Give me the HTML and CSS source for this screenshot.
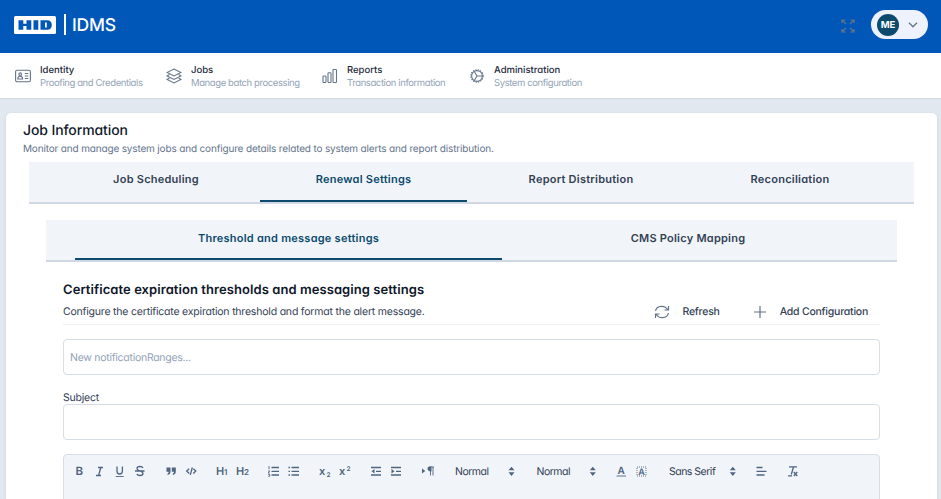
FILE: index.html
```html
<!DOCTYPE html>
<html lang="en">

	<head>
		<meta charset="utf-8">
		<title>HID IDMS</title>
		<link rel="stylesheet" href="styles.css">
	</head>

	<body>
		<!-- top bar -->
		<header class="topbar">
			<svg class="logo" width="42" height="18" viewBox="0 0 42 18">
				<rect width="42" height="18" rx="1.5" fill="#fff" />
				<g fill="#0057b8">
					<path d="M4.500 4.300h4.800v3.500h3.200V4.300h4.800v9.400h-4.800v-3.700H9.300v3.700H4.500zM19.500 4.300h4.800v9.400h-4.800zM26.500 4.300h6.500q4.800 0 4.800 4.700t-4.800 4.700h-6.500z" />
				</g>
				<path d="M31.900 6.500v5" stroke="#fff" stroke-width="1.800" />
			</svg>
			<span class="bar"></span>
			<span class="product">IDMS</span>
			<svg class="expand" width="14" height="14" viewBox="0 0 14 14">
				<path d="M5 5L1 1M1 4V1h3.500M9 5l4-4M9.500 1H13v3M5 9l-4 4M1 10v3h3.500M9 9l4 4M9.500 13H13v-3" />
			</svg>
			<div class="user">
				<span class="avatar">ME</span>
				<svg width="10" height="6" viewBox="0 0 10 6"><path d="M1 .8l4 4 4-4" /></svg>
			</div>
		</header>

		<!-- main menu -->
		<nav class="menu">
			<a class="menu-item identity">
				<svg width="16" height="16" viewBox="0 0 16 16">
					<rect x=".6" y="2.200" width="14.800" height="11.600" rx="1.500" />
					<circle cx="5.200" cy="6.200" r="1.300" />
					<path d="M2.800 11q0-2.700 2.400-2.700T7.600 11zM9.800 5.500h3.500M9.800 8h3.500M9.800 10.500h3.500" />
				</svg>
				<span><b>Identity</b><small>Proofing and Credentials</small></span>
			</a>
			<a class="menu-item jobs">
				<svg width="16" height="16" viewBox="0 0 16 16">
					<path d="M8 1l7 3.500L8 8 1 4.500zM3.400 6.500L1 8l7 3.500L15 8l-2.400-1.500M3.400 10L1 11.500 8 15l7-3.500-2.400-1.500" />
				</svg>
				<span><b>Jobs</b><small>Manage batch processing</small></span>
			</a>
			<a class="menu-item reports">
				<svg width="16" height="16" viewBox="0 0 16 16">
					<rect x="1" y="8" width="3" height="6.500" rx=".8" />
					<rect x="6" y="4.800" width="3" height="9.700" rx=".8" />
					<rect x="11" y="1.500" width="3.500" height="13" rx=".8" />
				</svg>
				<span><b>Reports</b><small>Transaction information</small></span>
			</a>
			<a class="menu-item admin">
				<svg width="16" height="16" viewBox="0 0 16 16">
					<circle cx="8" cy="8" r="5.400" />
					<circle cx="8" cy="8" r="6.200" stroke-dasharray="1.200 1.234" />
					<path d="M8 8h5M8 8L5.300 3.500M8 8l-2.700 4.500" />
				</svg>
				<span><b>Administration</b><small>System configuration</small></span>
			</a>
		</nav>

		<main class="card">
			<div class="card-head">
				<h1>Job Information</h1>
				<p>Monitor and manage system jobs and configure details related to system alerts and report distribution.</p>
			</div>

			<div class="tabs main-tabs">
				<a>Job Scheduling</a>
				<a class="active">Renewal Settings</a>
				<a>Report Distribution</a>
				<a>Reconciliation</a>
			</div>

			<div class="tabs sub-tabs">
				<a class="active">Threshold and message settings</a>
				<a>CMS Policy Mapping</a>
			</div>

			<section class="settings">
				<h2>Certificate expiration thresholds and messaging settings</h2>
				<div class="actions-row">
					<p>Configure the certificate expiration threshold and format the alert message.</p>
					<a class="action refresh">
						<svg width="16" height="14" viewBox="0 0 16 14">
							<path d="M1.500 5.800C3 0 11 0 13.800 4.800M14.500 1v4h-4M14.500 8.200C13 14 5 14 2.200 9.200M1.500 13V9h4" />
						</svg>
						Refresh
					</a>
					<a class="action add">
						<svg width="12" height="12" viewBox="0 0 12 12"><path d="M6 0v12M0 6h12" /></svg>
						Add Configuration
					</a>
				</div>

				<div class="field">New notificationRanges...</div>
				<label>Subject</label>
				<div class="field"></div>

				<!-- editor toolbar -->
				<div class="editor">
					<svg class="tools" width="814" height="32" viewBox="0 0 814 32">
						<g class="letters">
							<text x="11.500" y="20" font-size="11.500">B</text>
							<path d="M34 12.500h5M32 20.500h5M36.800 12.500l-2.200 8" />
							<path d="M53 11.500v4.500q0 3 2.700 3t2.700-3v-4.500" />
							<path d="M51.700 21.500h8" class="thin" />
							<path d="M79 13q-.8-1.500-3-1.500-3 0-3 2 0 1.300 3 2.500 3 1 3 2.500 0 2-3 2-2.500 0-3.200-1.500M71 16h9.500" />
							<path class="solid" d="M102.500 12.500h4v4q0 3-3 3.500v-1.300q1.200-.7 1.200-2h-2.200zM107.800 12.500h4v4q0 3-3 3.500v-1.300q1.200-.7 1.200-2h-2.200z" />
							<path d="M125.200 13.800l-2.500 2.300 2.500 2.300M129.300 13.800l2.500 2.300-2.500 2.300M128.300 12.500l-2 7.300" />
							<text x="152" y="20" font-size="11">H</text><text x="160" y="20" font-size="8">1</text>
							<text x="172" y="20" font-size="11">H</text><text x="180" y="20" font-size="8">2</text>
							<path d="M207.500 12.500h7.500M207.500 16.300h7.500M207.500 20h7.500" />
							<path class="thin" d="M205 11v3.200M204.200 16h1.500l-1.500 2h1.500M204.200 19.500h1.500v1.800h-1.500" />
							<path d="M227.500 12.500h7.500M227.500 16.300h7.500M227.500 20h7.500M224.500 12.500h1.500M224.500 16.300h1.500M224.500 20h1.500" />
							<text x="255" y="20" font-size="11">x</text><text x="262.500" y="22" font-size="6.500">2</text>
							<text x="275" y="20" font-size="11">x</text><text x="282.500" y="15.500" font-size="6.500">2</text>
							<path d="M307 12.500h10M312 16.300h5M307 20h10M327 12.500h10M332 16.300h5M327 20h10" />
							<path class="solid" d="M310.500 14v4.500l-3-2.200zM327.500 14v4.500l3-2.200zM358 13.500v5l3.300-2.500z" />
							<path class="solid" d="M365.500 11.500h2v5h-.6c-4 0-4.400-5-1.400-5z" />
							<path class="thin" d="M365.500 12h4.500M366.500 12v8.500M369 12v8.500" />
						</g>
						<g class="solid">
							<path d="M444.500 15.300l3-3.600 3 3.600zM444.500 17.300l3 3.600 3-3.600z" />
							<path d="M525.800 15.300l3-3.600 3 3.600zM525.800 17.300l3 3.600 3-3.600z" />
							<path d="M665.800 15.300l3-3.600 3 3.600zM665.800 17.300l3 3.600 3-3.600z" />
						</g>
						<g class="words">
							<text x="391" y="20">Normal</text>
							<text x="472.500" y="20">Normal</text>
							<text x="605" y="20">Sans Serif</text>
						</g>
						<g class="letters">
							<text x="553.500" y="19" font-size="10">A</text><path class="thin" d="M552.500 21h9.500" />
							<rect class="dots" x="573" y="12" width="9" height="9" />
							<text x="574.300" y="19.500" font-size="9">A</text>
							<path d="M692.500 12.500h6M692.500 16.300h10M692.500 20h8" />
							<path d="M725 11.800h8M729.500 12l-2.200 7.500M724 20.800h4M729.800 17l3.500 4M733.300 17l-3.500 4" />
						</g>
					</svg>
				</div>
			</section>
		</main>
	</body>

</html>
```
FILE: styles.css
```css
* {
	box-sizing: border-box;
}

body {
	margin: 0;
	height: 499px;
	overflow: hidden;
	background-color: #e2e8f0;
	color: #334155;
	font-family: Inter, "Liberation Sans", sans-serif;
	font-feature-settings: "cv11";
	font-size: 10.5px;
	text-rendering: geometricPrecision;
}

h1, h2, p {
	margin: 0;
}

svg {
	fill: none;
	flex: none;
}

/* top bar */
.topbar {
	display: flex;
	align-items: center;
	height: 53px;
	padding: 0 13px 4px 14px;
	background-color: #0057b8;
}

.bar {
	width: 2px;
	height: 21px;
	margin: 0 6px 0 8px;
	background-color: #fff;
}

.product {
	padding-top: 2px;
	color: #fff;
	font-size: 17.5px;
	font-weight: 500;
	letter-spacing: -.2px;
}

.expand {
	margin: 3px 16px 0 auto;
	stroke: #64748b;
	stroke-width: 1.2;
}

.user {
	display: flex;
	align-items: center;
	gap: 9px;
	width: 57px;
	height: 29px;
	padding-left: 6px;
	border-radius: 15px;
	background-color: #eef2ff;
	stroke: #64748b;
	stroke-width: 1.3;
}

.avatar {
	width: 22px;
	height: 22px;
	border-radius: 50%;
	background-color: #0c4a6e;
	color: #fff;
	font-size: 9.5px;
	font-weight: 700;
	line-height: 23px;
	text-align: center;
}

/* main menu */
.menu {
	display: flex;
	height: 46px;
	padding-left: 15px;
	border-bottom: 1px solid #d0d8e2;
	background-color: #fff;
}

.menu-item {
	display: flex;
	align-items: center;
	gap: 9px;
	stroke: #64748b;
	stroke-width: 1.1;
}

.menu-item span {
	padding-top: 2px;
}

.menu-item b,
.menu-item small {
	display: block;
	font-size: 9.5px;
	line-height: 13px;
	white-space: nowrap;
}

.menu-item b {
	color: #1e293b;
	font-weight: 500;
}

.menu-item small {
	color: #94a3b8;
	letter-spacing: -.4px;
}

.identity { width: 151px; }
.jobs { width: 156px; }
.reports { width: 147px; }

/* card */
.card {
	width: 931px;
	height: 386px;
	margin: 14px 0 0 6px;
	border-radius: 5px 5px 0 0;
	overflow: hidden;
	background-color: #fff;
	box-shadow: 0 1px 3px rgba(15, 23, 42, .12);
}

.card-head {
	height: 49px;
	padding: 8px 17px 0;
}

.card-head h1 {
	color: #0f172a;
	font-size: 14px;
	font-weight: 500;
	letter-spacing: -.1px;
	line-height: 19px;
}

.card-head p {
	margin-top: 2px;
	color: #64748b;
	font-size: 10px;
	letter-spacing: -.16px;
	line-height: 14px;
}

/* tabs */
.tabs {
	display: grid;
	height: 42px;
	border-bottom: 2px solid #cfd8e3;
	background-color: #f1f5f9;
}

.tabs a {
	height: 40px;
	font-size: 11px;
	font-weight: 600;
	letter-spacing: .24px;
	line-height: 35px;
	text-align: center;
}

.tabs .active {
	border-bottom: 2px solid #0c4a6e;
	color: #0c4a6e;
}

.main-tabs {
	grid-template-columns: 208px 207px 228px 190px;
	width: 885px;
	margin-left: 23px;
	padding-left: 23px;
}

.sub-tabs {
	grid-template-columns: 427px 372px;
	width: 851px;
	margin: 16px 0 0 40px;
	padding-left: 29px;
}

.sub-tabs a {
	line-height: 36px;
}

/* settings */
.settings {
	width: 817px;
	margin: 18px 0 0 57px;
}

.settings h2 {
	height: 19px;
	color: #0f172a;
	font-size: 13px;
	font-weight: 600;
	letter-spacing: .07px;
	line-height: 20px;
}

.actions-row {
	display: flex;
	align-items: center;
	height: 26px;
	margin-bottom: 14px;
	padding-right: 12px;
	border-bottom: 1px solid #eef2f7;
}

.actions-row p {
	flex: 1;
	letter-spacing: -.2px;
}

.action {
	display: flex;
	align-items: center;
	color: #334155;
	font-weight: 500;
	letter-spacing: -.23px;
}

.action svg {
	stroke: #64748b;
	stroke-width: 1.2;
}

.refresh {
	gap: 12px;
	margin-right: 34px;
}

.add {
	gap: 14px;
}

.field {
	height: 36px;
	padding-left: 6px;
	border: 1px solid #d5dde7;
	border-radius: 4px;
	color: #94a3b8;
	letter-spacing: -.27px;
	line-height: 35px;
}

.settings label {
	display: block;
	height: 13px;
	margin-top: 16px;
	letter-spacing: -.2px;
	line-height: 14px;
}

/* editor */
.editor {
	height: 60px;
	margin-top: 14px;
	border: 1px solid #d5dde7;
	border-radius: 4px;
	background-color: #f1f5f9;
}

.tools {
	display: block;
}

.letters {
	stroke: #4f6580;
	stroke-width: 1.3;
}

.letters text {
	fill: #4f6580;
	stroke: none;
	font-weight: 600;
}

.letters .thin {
	stroke-width: .9;
}

.solid,
.letters .solid {
	fill: #4f6580;
	stroke: none;
}

.letters .dots {
	stroke: #64748b;
	stroke-width: 1;
	stroke-dasharray: 1 1;
}

.words {
	fill: #334155;
	letter-spacing: -.5px;
}
```
